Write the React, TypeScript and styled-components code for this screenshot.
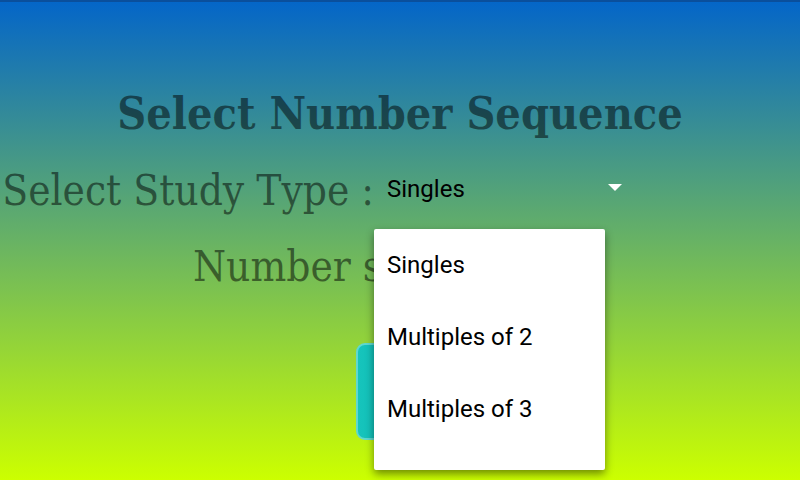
import React from 'react'
import styled, { createGlobalStyle } from 'styled-components'

const Global = createGlobalStyle`
    html, body {
        margin: 0;
        padding: 0;
    }
    body {
        width: 800px;
        height: 480px;
        overflow: hidden;
    }
`

const options = ['Singles', 'Multiples of 2', 'Multiples of 3']

export default function App() {
    return (
        <>
            <Global />
            <Screen>
                <Title>Select Number Sequence</Title>
                <Form>
                    <Label>
                        <span>Select Study Type :</span>
                    </Label>
                    <Spinner>
                        <SpinnerText>Singles</SpinnerText>
                        <Arrow />
                    </Spinner>
                    <SecondLabel>Number sequence :</SecondLabel>
                </Form>
                <ButtonRow>
                    <StartButton />
                </ButtonRow>
                <Menu>
                    {options.map((o) => (
                        <MenuItem key={o}>{o}</MenuItem>
                    ))}
                </Menu>
            </Screen>
        </>
    )
}

const Screen = styled.div`
    position: relative;
    width: 800px;
    height: 480px;
    box-sizing: border-box;
    border-top: 2px solid #0a4f9c;
    background: linear-gradient(to bottom, #0466c8 0%, #ccff00 100%);
    overflow: hidden;
`

const Title = styled.h1`
    margin: 0;
    padding-top: 86px;
    text-align: center;
    font-family: 'DejaVu Serif Condensed', 'DejaVu Serif', serif;
    font-weight: bold;
    font-size: 44.6px;
    line-height: 52px;
    color: rgba(0, 0, 0, 0.5);
`

const Form = styled.div`
    display: grid;
    grid-template-columns: 374px 1fr;
    grid-auto-rows: 70px;
    margin-top: 32px;
`

const Label = styled.div`
    display: flex;
    justify-content: flex-end;
    font-family: 'DejaVu Serif Condensed', 'DejaVu Serif', serif;
    font-size: 42px;
    line-height: 38px;
    color: rgba(0, 0, 0, 0.5);
    white-space: nowrap;
    span {
        flex-shrink: 0;
    }
`

const SecondLabel = styled.div`
    grid-column: 1 / 3;
    padding-left: 193px;
    font-family: 'DejaVu Serif Condensed', 'DejaVu Serif', serif;
    font-size: 42px;
    line-height: 50px;
    color: rgba(0, 0, 0, 0.5);
    white-space: nowrap;
`

const Spinner = styled.div`
    align-self: start;
    display: flex;
    align-items: center;
    width: 248px;
    height: 34px;
    padding-left: 13px;
    box-sizing: border-box;
`

const SpinnerText = styled.span`
    flex: 1;
    font-family: Roboto, sans-serif;
    font-size: 24px;
    color: #000;
`

const Arrow = styled.span`
    width: 0;
    height: 0;
    margin-top: -3px;
    border-left: 7px solid transparent;
    border-right: 7px solid transparent;
    border-top: 7px solid #fff;
`

const ButtonRow = styled.div`
    padding-left: 356px;
    padding-top: 31px;
`

const StartButton = styled.div`
    width: 120px;
    height: 97px;
    box-sizing: border-box;
    border-radius: 9px;
    border: 2px solid #5fd8d0;
    background: linear-gradient(to right, #16c4bc, #00b3a8);
`

const Menu = styled.div`
    position: absolute;
    left: 374px;
    top: 227px;
    width: 231px;
    height: 241px;
    background: #fff;
    border-radius: 2px;
    box-shadow: 0 4px 9px rgba(0, 0, 0, 0.45);
`

const MenuItem = styled.div`
    height: 72px;
    line-height: 72px;
    padding-left: 13px;
    font-family: Roboto, sans-serif;
    font-size: 24px;
    color: #000;
`
